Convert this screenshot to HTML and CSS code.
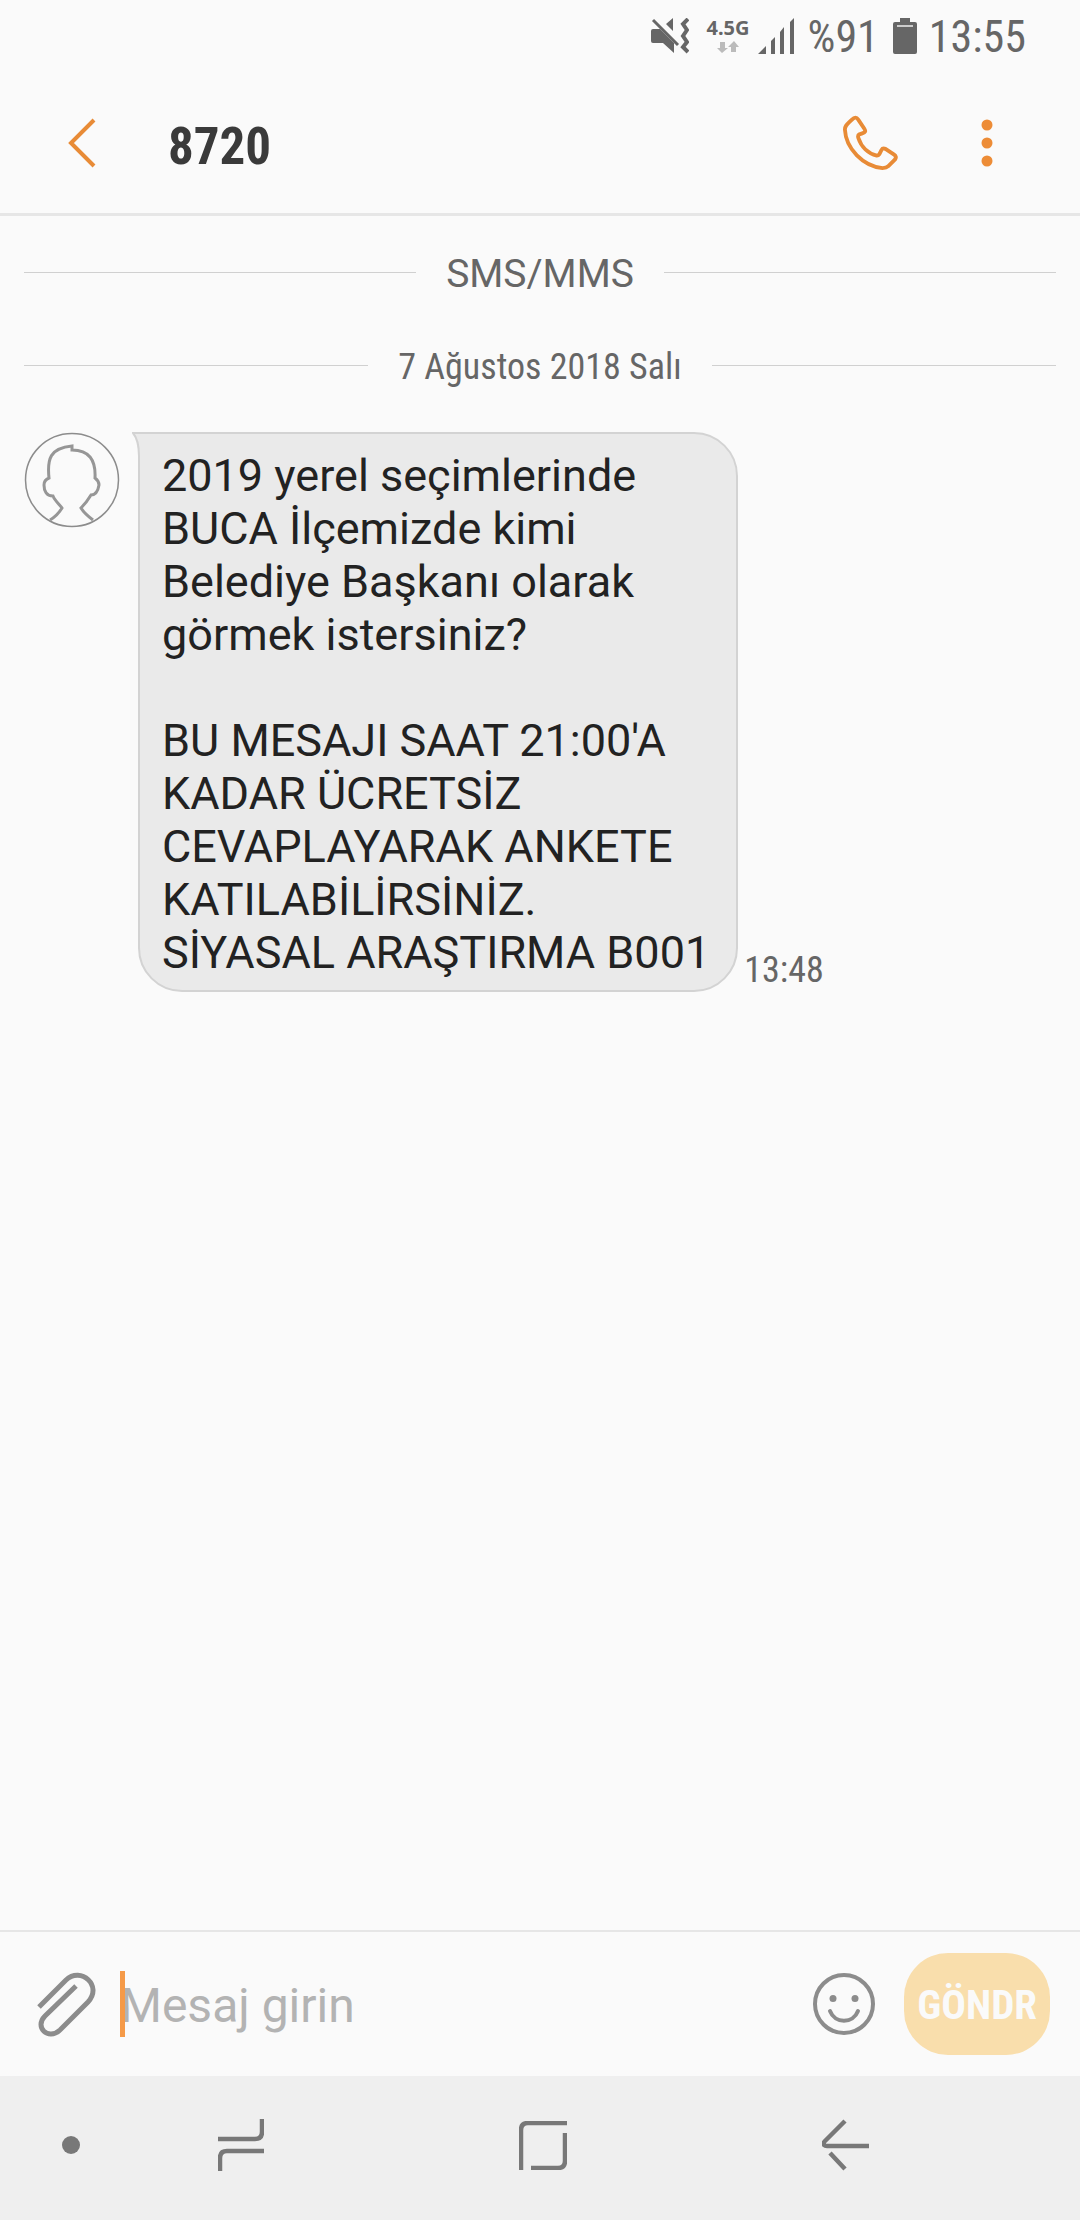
FILE: index.html
```html
<!DOCTYPE html>
<html lang="tr">
<head>
<meta charset="utf-8">
<meta name="viewport" content="width=device-width, initial-scale=1">
<title>8720</title>
<link rel="stylesheet" href="styles.css">
</head>
<body>
<div class="screen">
  <div class="status">
    <svg class="status-mute" width="38" height="36" viewBox="0 0 38 36" aria-hidden="true">
      <path fill="#666" d="M2 11H9L23 25V35L12 25H2Q0 25 0 23V13Q0 11 2 11ZM15 6 22 0V13Z"/>
      <path fill="none" stroke="#666" stroke-width="3" d="M2 2 27 27"/>
      <path fill="none" stroke="#666" stroke-width="4" d="M37 1 32 6 36 12 32 18 36 24 32 29 37 34"/>
    </svg>
    <div class="network">
      <span class="network-type">4.5G</span>
      <svg width="22" height="12" viewBox="0 0 22 12" aria-hidden="true"><path fill="#bbb" d="M3 1H8V7H11L5 12 0 7H3ZM14 11V6H11L17 0 22 6H19V11Z"/></svg>
    </div>
    <svg class="status-signal" width="36" height="36" viewBox="0 0 36 36" aria-hidden="true"><path fill="#666" d="M0 36 8 28V36ZM13 23 17 19V36H13ZM22 14 26 9V36H22ZM32 4 36 0V36H32Z"/></svg>
    <span class="battery-level">%91</span>
    <svg class="status-battery" width="24" height="36" viewBox="0 0 24 36" aria-hidden="true"><path fill="#666" d="M7 0H17V4H22Q24 4 24 6V34Q24 36 22 36H2Q0 36 0 34V6Q0 4 2 4H7Z"/><path fill="#ccc" d="M4 7H20V9H4Z"/></svg>
    <span class="clock">13:55</span>
  </div>

  <header class="header">
    <button class="icon-button back" type="button" aria-label="Geri">
      <svg width="28" height="50" viewBox="0 0 28 50"><path fill="none" stroke="#e88b36" stroke-width="4" d="M26 2 3 25 26 48"/></svg>
    </button>
    <h1 class="title">8720</h1>
    <button class="icon-button call" type="button" aria-label="Ara">
      <svg width="56" height="56" viewBox="0 0 58 58"><path fill="none" stroke="#e88b36" stroke-width="4" stroke-linejoin="round" d="M3 15C3 11 5 10 10 5C13 2 15 2 17 5L23 14C25 17 24 18 21 19L18 20Q16 21 17 24C20 33 27 40 36 42Q38 42 39 40L41 36Q42 34 45 35L54 41Q57 43 55 46L48 53Q46 55 42 55C22 53 4 35 3 15Z"/></svg>
    </button>
    <button class="icon-button more" type="button" aria-label="Diğer seçenekler">
      <svg width="12" height="48" viewBox="0 0 12 48"><g fill="#ed8c36"><circle cx="6" cy="6" r="5.5"/><circle cx="6" cy="24" r="5.5"/><circle cx="6" cy="42" r="5.5"/></g></svg>
    </button>
  </header>

  <main class="thread">
    <div class="divider divider-type"><span>SMS/MMS</span></div>
    <div class="divider divider-date"><span>7 Ağustos 2018 Salı</span></div>
    <article class="message">
      <svg class="avatar" width="96" height="96" viewBox="0 0 96 96" aria-hidden="true">
        <circle cx="48" cy="48" r="46.5" fill="none" stroke="#8c8c8c" stroke-width="1.5"/>
        <path fill="none" stroke="#969696" stroke-width="3" d="M26 88C31 85 35 81 38 76C36 73 31 69 29 64C22 64 20 58 20 53Q20 48 25 46C23 27 26 16 48 14V18C65 18 72 28 71 46Q75 49 75 53C74 59 72 63 67 63C64 68 60 73 57 76C60 81 65 85 69 88"/>
      </svg>
      <div class="bubble">
        <svg class="tail" width="12" height="46" viewBox="0 0 12 46" aria-hidden="true"><path fill="#eaeaea" d="M0 1H12V46H6V24Q6 8 0 1Z"/><path fill="none" stroke="#d3d3d3" stroke-width="2" d="M12 1H1Q7 8 7 24V46"/></svg>
        <p class="bubble-text">2019 yerel seçimlerinde
BUCA İlçemizde kimi
Belediye Başkanı olarak
görmek istersiniz?

BU MESAJI SAAT 21:00'A
KADAR ÜCRETSİZ
CEVAPLAYARAK ANKETE
KATILABİLİRSİNİZ.
SİYASAL ARAŞTIRMA B001</p>
      </div>
      <time class="message-time">13:48</time>
    </article>
  </main>

  <form class="composer">
    <button class="icon-button attach" type="button" aria-label="Ekle">
      <svg width="60" height="66" viewBox="0 0 60 66"><path fill="none" stroke="#8c8c8c" stroke-width="5" d="M3 36 30 9C45-5 67 15 52 31L24 59C12 70-2 56 9 45L40 15"/></svg>
    </button>
    <div class="field">
      <input class="message-input" type="text" aria-label="Mesaj girin" placeholder="Mesaj girin">
      <span class="caret"></span>
    </div>
    <button class="icon-button emoji" type="button" aria-label="İfade ekle">
      <svg width="62" height="62" viewBox="0 0 62 62"><g fill="none" stroke="#8c8c8c" stroke-width="4"><circle cx="31" cy="31" r="29"/><path stroke-linecap="round" d="M17 38C22 51 40 51 45 38"/></g><g fill="#8c8c8c"><circle cx="20" cy="25.500" r="3.500"/><circle cx="42" cy="25.500" r="3.500"/></g></svg>
    </button>
    <button class="send" type="submit">GÖNDR</button>
  </form>

  <nav class="navbar" aria-label="Gezinme">
    <button class="icon-button pin" type="button" aria-label="Gezinme çubuğunu gizle">
      <svg width="18" height="18" viewBox="0 0 18 18"><circle cx="9" cy="9" r="9" fill="#787878"/></svg>
    </button>
    <button class="icon-button" type="button" aria-label="Son uygulamalar">
      <svg width="46" height="52" viewBox="0 0 46 52"><path fill="none" stroke="#787878" stroke-width="4.500" d="M0 20H37Q44 20 44 13V0M2 52V39Q2 32 9 32H46"/></svg>
    </button>
    <button class="icon-button" type="button" aria-label="Ana ekran">
      <svg width="48" height="49" viewBox="0 0 48 49"><path fill="none" stroke="#787878" stroke-width="4.500" d="M48 2H9Q2 2 2 9V49M12 47H39Q46 47 46 40V12"/></svg>
    </button>
    <button class="icon-button" type="button" aria-label="Geri">
      <svg width="47" height="52" viewBox="0 0 47 52"><path fill="none" stroke="#787878" stroke-width="4.500" d="M23 2 3 22Q1 24 2 26 3 27 5 27H47M8 34 23 50"/></svg>
    </button>
  </nav>
</div>
</body>
</html>
```
FILE: styles.css
```css
* { box-sizing: border-box; }

body {
  margin: 0;
  background: #fafafa;
  color: #666;
  font-family: Roboto, "Noto Sans", sans-serif;
}

.screen {
  display: flex;
  flex-direction: column;
  min-height: 100vh;
}

.icon-button {
  display: grid;
  place-items: center;
  padding: 0;
  border: 0;
  background: none;
}

svg { display: block; flex: none; }

.status,
.title,
.divider-date,
.message-time,
.send {
  font-family: "Roboto Condensed", "Liberation Sans Narrow", Roboto, sans-serif;
}

/* Status bar */
.status {
  display: flex;
  align-items: center;
  justify-content: flex-end;
  height: 72px;
  padding-right: 54px;
  font-size: 44px;
  line-height: 72px;
}
.battery-level,
.clock { padding-top: 2px; }
.status-mute { margin-right: 18px; }
.network {
  display: flex;
  flex-direction: column;
  align-items: center;
  gap: 4px;
  margin-right: 8px;
}
.network-type {
  font: bold 20px/18px "Noto Sans", sans-serif;
}
.status-signal { margin-right: 14px; }
.status-battery { margin: 0 12px 0 14px; }

/* Conversation header */
.header {
  display: flex;
  align-items: center;
  height: 144px;
  padding: 0 87px 0 68px;
  border-bottom: 3px solid #e6e6e6;
}
.title {
  flex: 1;
  margin: 0 0 0 72px;
  padding-top: 8px;
  color: #3a3a3a;
  font-size: 51px;
  line-height: 60px;
}
.more { margin-left: 83px; }

/* Message list */
.thread {
  flex: 1;
  padding: 30px 24px;
}
.divider {
  display: flex;
  align-items: center;
  line-height: 48px;
}
.divider::before,
.divider::after {
  content: "";
  flex: 1;
  height: 1px;
  background: #d0d0d0;
}
.divider span {
  margin: 0 30px;
  padding-top: 4px;
}
.divider-type { font-size: 39px; }
.divider-date { margin-top: 41px; font-size: 36px; }

.message {
  display: flex;
  align-items: flex-start;
  margin-top: 41px;
}
.bubble {
  position: relative;
  margin-left: 18px;
  padding: 15px 26px 11px 22px;
  border: 2px solid #d3d3d3;
  border-radius: 0 44px 44px 44px;
  background: #eaeaea;
  color: #222;
}
.tail {
  position: absolute;
  top: -2px;
  left: -8px;
}
.bubble-text {
  margin: 0;
  font-size: 45px;
  line-height: 53px;
  white-space: pre-line;
}
.message-time {
  align-self: flex-end;
  margin-left: 6px;
  font-size: 36px;
  line-height: 44px;
}

/* Composer */
.composer {
  display: flex;
  align-items: center;
  height: 146px;
  padding: 0 30px 0 36px;
  border-top: 2px solid #e6e6e6;
}
.field {
  position: relative;
  flex: 1;
  margin-left: 24px;
}
.message-input {
  display: block;
  width: 100%;
  height: 66px;
  padding: 3px 0 0;
  border: 0;
  background: none;
  font: 48px/63px Roboto, sans-serif;
}
.message-input::placeholder { color: #b3b3b3; opacity: 1; }
.caret {
  position: absolute;
  top: 0;
  left: 0;
  width: 5px;
  height: 66px;
  background: #f59a48;
}
.send {
  height: 102px;
  margin-left: 29px;
  padding: 2px 13px 0;
  border: 0;
  border-radius: 44px;
  background: #f9deac;
  color: #fafafa;
  font-size: 41px;
  font-weight: bold;
}

/* System navigation */
.navbar {
  display: grid;
  grid-template-columns: 45fr 151fr 151fr 151fr 42fr;
  align-items: center;
  height: 144px;
  padding-bottom: 6px;
  background: #efefef;
}
.pin {
  justify-items: end;
  padding-right: 10px;
}
```
